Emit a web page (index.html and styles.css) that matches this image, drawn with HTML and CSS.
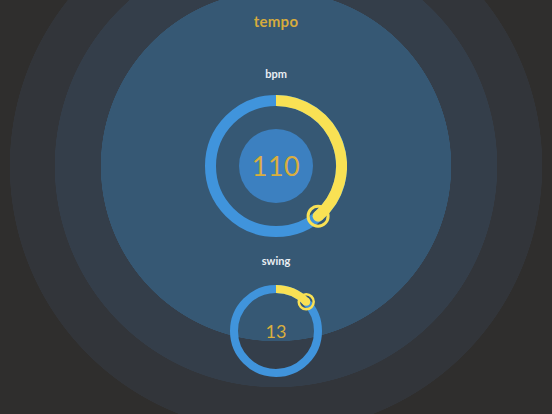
FILE: index.html
```html
<!DOCTYPE html>
<html>
<head>
<meta charset="utf-8">
<link rel="stylesheet" href="styles.css">
</head>
<body>
<main class="panel">
  <h1 class="title">tempo</h1>
  <div class="label label-bpm">bpm</div>
  <div class="knob knob-big">
    <svg width="142" height="142" viewBox="0 0 142 142">
      <circle cx="71" cy="71" r="65.5" fill="none" stroke="#4094dc" stroke-width="11"/>
      <circle cx="71" cy="71" r="37" fill="#3c80c0"/>
      <path d="M71 5.5 A65.5 65.5 0 0 1 113.1 121.2" fill="none" stroke="#f9e154" stroke-width="11"/>
      <circle cx="113.1" cy="121.2" r="5.5" fill="#f9e154"/>
      <circle cx="113.1" cy="121.2" r="10" fill="none" stroke="#f9e154" stroke-width="3"/>
    </svg>
    <span class="value value-big">110</span>
  </div>
  <div class="label label-swing">swing</div>
  <div class="knob knob-small">
    <svg width="92" height="92" viewBox="0 0 92 92">
      <circle cx="46" cy="46" r="42" fill="none" stroke="#4094dc" stroke-width="8"/>
      <path d="M46 4 A42 42 0 0 1 76.2 16.8" fill="none" stroke="#f9e154" stroke-width="8"/>
      <circle cx="76.2" cy="16.8" r="4" fill="#f9e154"/>
      <circle cx="76.2" cy="16.8" r="7.5" fill="none" stroke="#f9e154" stroke-width="2.5"/>
    </svg>
    <span class="value value-small">13</span>
  </div>
</main>
</body>
</html>
```
FILE: styles.css
```css
html, body {
  margin: 0;
  padding: 0;
}
body {
  width: 552px;
  height: 414px;
  overflow: hidden;
  background:
    radial-gradient(circle at 276px 166px,
      #365874 0, #365874 175px,
      #343e4a 175.5px, #343e4a 221px,
      #32353a 221.5px, #32353a 266px,
      #2f2e2d 266.5px);
  font-family: Lato, "Open Sans", "DejaVu Sans", sans-serif;
}
.panel {
  display: flex;
  flex-direction: column;
  align-items: center;
  padding-top: 11px;
}
.title {
  margin: 0;
  font-size: 15px;
  line-height: 20px;
  font-weight: 700;
  color: #d6ab3d;
  letter-spacing: 0.3px;
}
.label {
  font-size: 11px;
  line-height: 14px;
  font-weight: 700;
  color: #e9eef3;
}
.label-bpm {
  margin-top: 36px;
}
.label-swing {
  margin-top: 17px;
}
.knob {
  display: grid;
  place-items: center;
}
.knob > * {
  grid-area: 1 / 1;
}
.knob svg {
  display: block;
}
.knob-big {
  margin-top: 14px;
}
.knob-small {
  margin-top: 17px;
}
.value {
  color: #d9ae3e;
  font-weight: 400;
}
.value-big {
  font-size: 27px;
  line-height: 30px;
  letter-spacing: 0.5px;
}
.value-small {
  font-size: 18px;
  line-height: 20px;
}
```
